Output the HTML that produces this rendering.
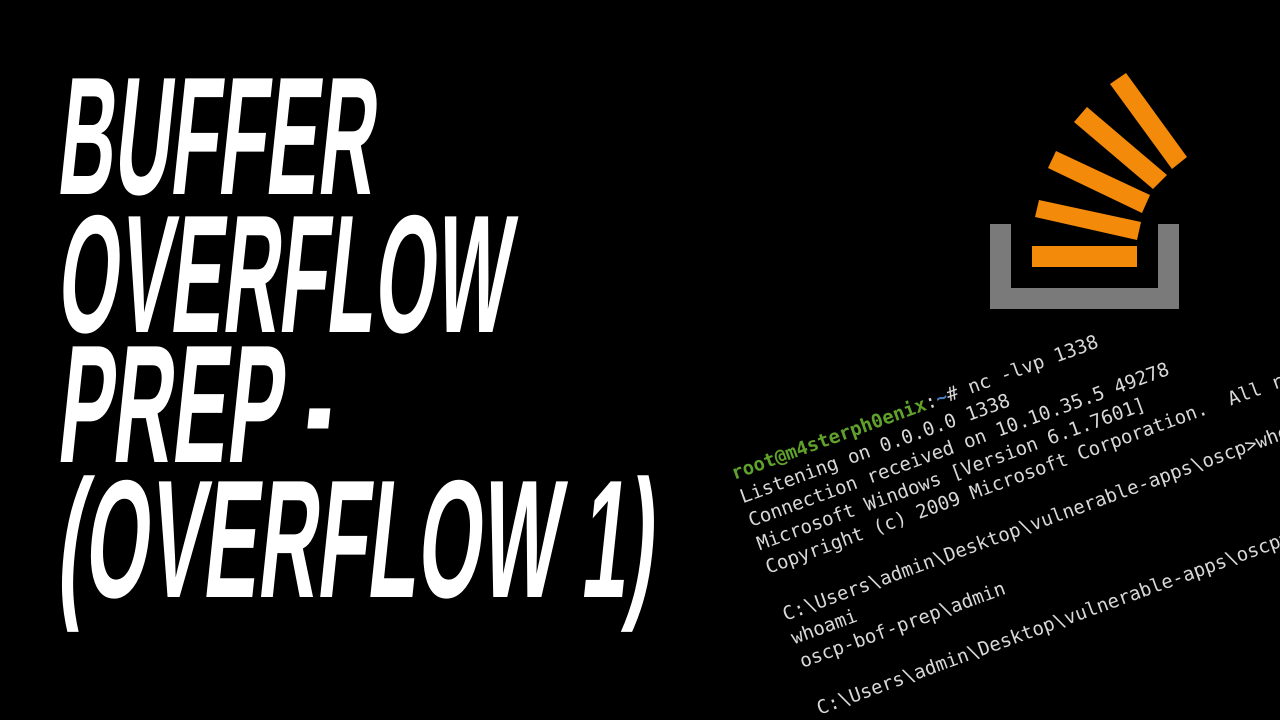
<!DOCTYPE html>
<html><head><meta charset="utf-8"><style>
html,body{margin:0;padding:0;background:#000;width:1280px;height:720px;overflow:hidden;position:relative}
.t{position:absolute;left:70px;font-family:"Liberation Sans",sans-serif;font-weight:bold;font-size:168px;color:#fff;line-height:1;white-space:nowrap;transform-origin:0 0}
.term{position:absolute;left:728px;top:463px;transform-origin:0 0;transform:rotate(-20deg);font-family:"DejaVu Sans Mono","Liberation Mono",monospace;font-size:19px;line-height:25px;color:#d8d8d8;white-space:pre}
.g{color:#5fa12a;font-weight:bold}.b{color:#4a7fc0;font-weight:bold}
</style></head><body>
<div class="t" style="top:52px;transform:skewX(-6deg) scaleX(0.465)">BUFFER</div>
<div class="t" style="top:190px;transform:skewX(-6deg) scaleX(0.465)">OVERFLOW</div>
<div class="t" style="top:320px;transform:skewX(-6deg) scaleX(0.49)">PREP -</div>
<div class="t" style="top:455px;transform:skewX(-6deg) scaleX(0.488)">(OVERFLOW 1)</div>
<svg style="position:absolute;left:0;top:0" width="1280" height="720">
<path d="M990 224H1011V288H1158V224H1179V309H990Z" fill="#7a7a7a"/>
<g fill="#f48a0a">
<rect x="1032" y="246" width="105" height="21"/>
<polygon points="1035,217 1039,200 1141,222 1137,240"/>
<polygon points="1048,168 1056,151 1150,195 1142,213"/>
<polygon points="1074,122 1087,107 1167,175 1153,189"/>
<polygon points="1110,84 1126,73 1187,157 1172,169"/>
</g>
</svg>
<div class="term"><span class="g">root@m4sterph0enix</span>:<span class="b">~</span># nc -lvp 1338
Listening on 0.0.0.0 1338
Connection received on 10.10.35.5 49278
Microsoft Windows [Version 6.1.7601]
Copyright (c) 2009 Microsoft Corporation.  All rights reserved.

C:\Users\admin\Desktop\vulnerable-apps\oscp>whoami
whoami
oscp-bof-prep\admin

C:\Users\admin\Desktop\vulnerable-apps\oscp></div>
</body></html>
